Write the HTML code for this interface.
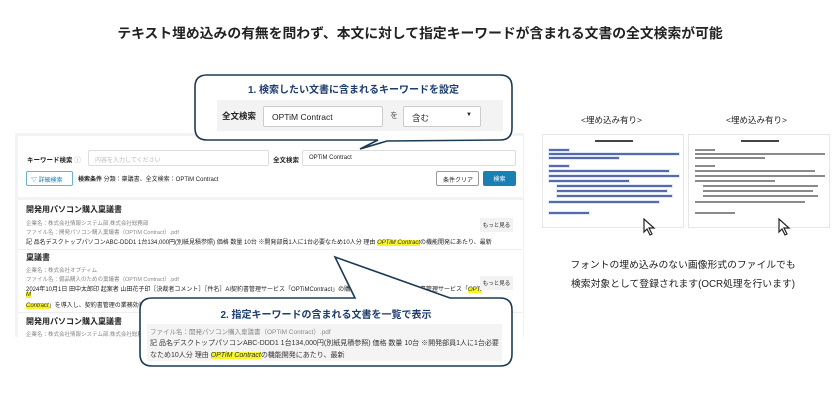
<!DOCTYPE html>
<html><head><meta charset="utf-8"><style>
*{margin:0;padding:0;box-sizing:border-box}
body{width:840px;height:407px;background:#fff;font-family:"Liberation Sans","Noto Sans CJK JP",sans-serif;position:relative;overflow:hidden;color:#222}
.a{position:absolute;white-space:nowrap}
.sm{font-size:5.5px;color:#888}
.hl{background:#f5f52a;font-style:italic;color:#333}
.doc{position:absolute;background:#fff;border:1px solid #e6e6e6;width:142px;height:94px;top:134px}
.ln{position:absolute;height:1.5px;background:#8a8a8a;left:6px}
.bl .ln{background:#5a6aa8;box-shadow:0 0 0 1px #dde9f7}
</style></head><body>
<div class="a" style="left:0;width:840px;text-align:center;top:22px;font-size:13.8px;font-weight:bold;color:#222">テキスト埋め込みの有無を問わず、本文に対して指定キーワードが含まれる文書の全文検索が可能</div>

<!-- left panel -->
<div class="a" style="left:15px;top:133px;width:509px;height:204px;background:#f1f3f5"></div>
<div class="a" style="left:18px;top:136px;width:505px;height:61px;background:#fff"></div>
<div class="a" style="left:27px;top:154px;font-size:6.5px;font-weight:bold">キーワード検索 <span style="color:#999;font-weight:normal">ⓘ</span></div>
<div class="a" style="left:88px;top:150px;width:181px;height:16px;border:1px solid #ddd;border-radius:2px;font-size:6px;color:#bbb;padding:4px 6px">内容を入力してください</div>
<div class="a" style="left:273px;top:154px;font-size:6.5px;font-weight:bold">全文検索</div>
<div class="a" style="left:302px;top:150px;width:214px;height:16px;border:1px solid #ddd;border-radius:2px;font-size:6px;padding:4px 6px">OPTiM Contract</div>
<div class="a" style="left:26px;top:171px;width:47px;height:15px;border:1px solid #6ab0cf;border-radius:2px;font-size:6px;color:#1a7fb0;padding:3px 4px">▽ 詳細検索</div>
<div class="a" style="left:78px;top:174px;font-size:6px"><b>検索条件</b> 分類：稟議書、全文検索：OPTiM Contract</div>
<div class="a" style="left:436px;top:171px;width:43px;height:15px;border:1px solid #999;border-radius:2px;font-size:6px;padding:3px 6px">条件クリア</div>
<div class="a" style="left:483px;top:171px;width:33px;height:15px;background:#1a80b3;border-radius:2px;font-size:6px;color:#fff;text-align:center;padding-top:3px">検索</div>

<div class="a" style="left:18px;top:200px;width:505px;height:137px;background:#fff"></div>
<div class="a" style="left:18px;top:249px;width:505px;height:1px;background:#eee"></div>
<div class="a" style="left:18px;top:312px;width:505px;height:1px;background:#eee"></div>
<div class="a" style="left:26px;top:204px;font-size:8px;font-weight:bold">開発用パソコン購入稟議書</div>
<div class="a sm" style="left:26px;top:219px">企業名：株式会社情報システム部,株式会社総務部</div>
<div class="a sm" style="left:26px;top:228px">ファイル名：開発パソコン購入稟議書（OPTiM Contract）.pdf</div>
<div class="a" style="left:26px;top:237px;font-size:6px">記 品名デスクトップパソコンABC-DDD1 1台134,000円(別紙見積参照) 価格 数量 10台 ※開発部員1人に1台必要なため10人分 理由 <span class="hl">OPTiM Contract</span>の機能開発にあたり、最新</div>
<div class="a" style="left:480px;top:218px;width:33px;height:14px;background:#f2f2f2;font-size:5.5px;text-align:center;padding-top:3px">もっと見る</div>
<div class="a" style="left:26px;top:252px;font-size:8px;font-weight:bold">稟議書</div>
<div class="a sm" style="left:26px;top:266px">企業名：株式会社オプティム</div>
<div class="a sm" style="left:26px;top:275px">ファイル名：備品購入のための稟議書（OPTiM Contract）.pdf</div>
<div class="a" style="left:26px;top:284px;font-size:6px">2024年10月1日 田中太郎印 起案者 山田花子印［決裁者コメント］［件名］AI契約書管理サービス「OPTiMContract」の購入について 1.</div>
<div class="a" style="left:420px;top:284px;font-size:6px">書管理サービス「<span class="hl">OPTi</span></div>
<div class="a" style="left:26px;top:292px;font-size:6px"><span class="hl">M</span></div>
<div class="a" style="left:26px;top:300px;font-size:6px"><span class="hl">Contract</span>」を導入し、契約書管理の業務効率を向上</div>
<div class="a" style="left:480px;top:276px;width:33px;height:14px;background:#f2f2f2;font-size:5.5px;text-align:center;padding-top:3px">もっと見る</div>
<div class="a" style="left:26px;top:316px;font-size:8px;font-weight:bold">開発用パソコン購入稟議書</div>
<div class="a sm" style="left:26px;top:330px">企業名：株式会社情報システム部,株式会社総務部</div>

<!-- bubbles -->
<svg class="a" style="left:0;top:0" width="840" height="407">
<path d="M207 75 H500 Q512 75 512 87 V128 Q512 140 500 140 L387 141 L360 149 L378 140 H207 Q195 140 195 128 V87 Q195 75 207 75 Z" fill="#fff" stroke="#1d3a55" stroke-width="1.6"/>
<path d="M152 298 H355 L335 257 L450 298 H500 Q512 298 512 310 V354 Q512 366 500 366 H152 Q140 366 140 354 V310 Q140 298 152 298 Z" fill="#fff" stroke="#1d3a55" stroke-width="1.6"/>
</svg>
<div class="a" style="left:195px;width:317px;text-align:center;top:81px;font-size:10px;font-weight:bold;color:#1d3d6e">1. 検索したい文書に含まれるキーワードを設定</div>
<div class="a" style="left:217px;top:100px;width:286px;height:31px;background:#f3f3f3"></div>
<div class="a" style="left:222px;top:110px;font-size:8.5px;font-weight:bold">全文検索</div>
<div class="a" style="left:263px;top:106px;width:120px;height:21px;background:#fff;border:1px solid #ccc;border-radius:2px;font-size:8.5px;padding:5px 8px">OPTiM Contract</div>
<div class="a" style="left:390px;top:110px;font-size:8px;color:#555">を</div>
<div class="a" style="left:403px;top:106px;width:78px;height:21px;background:#fff;border:1px solid #ccc;border-radius:2px;font-size:8.5px;padding:5px 8px">含む<span style="position:absolute;right:8px;top:5px;font-size:6px">▼</span></div>

<div class="a" style="left:140px;width:372px;text-align:center;top:306px;font-size:10px;font-weight:bold;color:#1d3d6e">2. 指定キーワードの含まれる文書を一覧で表示</div>
<div class="a" style="left:147px;top:324px;width:355px;height:37px;background:#f4f4f4"></div>
<div class="a" style="left:150px;top:326px;font-size:6.5px;color:#888">ファイル名：開発パソコン購入稟議書（OPTiM Contract）.pdf</div>
<div class="a" style="left:150px;top:338px;font-size:7px;color:#333">記 品名デスクトップパソコンABC-DDD1 1台134,000円(別紙見積参照) 価格 数量 10台 ※開発部員1人に1台必要</div>
<div class="a" style="left:150px;top:350px;font-size:7px;color:#333">なため10人分 理由 <span class="hl">OPTiM Contract</span>の機能開発にあたり、最新</div>

<!-- right -->
<div class="a" style="left:581px;top:114px;font-size:8.5px">&lt;埋め込み有り&gt;</div>
<div class="a" style="left:726px;top:114px;font-size:8.5px">&lt;埋め込み有り&gt;</div>
<div class="doc bl" style="left:542px">
<div class="ln" style="left:52px;width:38px;top:5px;background:#444;box-shadow:none"></div>
<div class="ln" style="top:14px;width:20px"></div><div class="ln" style="top:18px;width:130px"></div><div class="ln" style="top:22px;width:70px"></div>
<div class="ln" style="top:30px;width:20px"></div><div class="ln" style="top:35px;width:120px"></div><div class="ln" style="top:40px;width:130px"></div><div class="ln" style="top:45px;width:80px"></div>
<div class="ln" style="top:50px;left:14px;width:115px"></div><div class="ln" style="top:55px;left:14px;width:110px"></div><div class="ln" style="top:60px;left:14px;width:115px"></div><div class="ln" style="top:66px;width:110px"></div><div class="ln" style="top:77px;width:40px"></div>
</div>
<div class="doc" style="left:688px">
<div class="ln" style="left:52px;width:38px;top:5px;background:#444"></div>
<div class="ln" style="top:14px;width:20px"></div><div class="ln" style="top:18px;width:130px"></div><div class="ln" style="top:22px;width:70px"></div>
<div class="ln" style="top:30px;width:20px"></div><div class="ln" style="top:35px;width:120px"></div><div class="ln" style="top:40px;width:130px"></div><div class="ln" style="top:45px;width:80px"></div>
<div class="ln" style="top:50px;left:14px;width:115px"></div><div class="ln" style="top:55px;left:14px;width:110px"></div><div class="ln" style="top:60px;left:14px;width:115px"></div><div class="ln" style="top:66px;width:110px"></div><div class="ln" style="top:77px;width:40px"></div>
</div>
<svg class="a" style="left:643px;top:218px" width="14" height="18"><path d="M1 1 L1 14 L4 11 L7 17 L9 16 L6 10 L11 10 Z" fill="#fff" stroke="#222" stroke-width="1.2"/></svg>
<svg class="a" style="left:778px;top:218px" width="14" height="18"><path d="M1 1 L1 14 L4 11 L7 17 L9 16 L6 10 L11 10 Z" fill="#fff" stroke="#222" stroke-width="1.2"/></svg>
<div class="a" style="left:560px;width:246px;text-align:center;top:256px;font-size:9.8px;line-height:19px">フォントの埋め込みのない画像形式のファイルでも<br>検索対象として登録されます(OCR処理を行います)</div>
</body></html>
